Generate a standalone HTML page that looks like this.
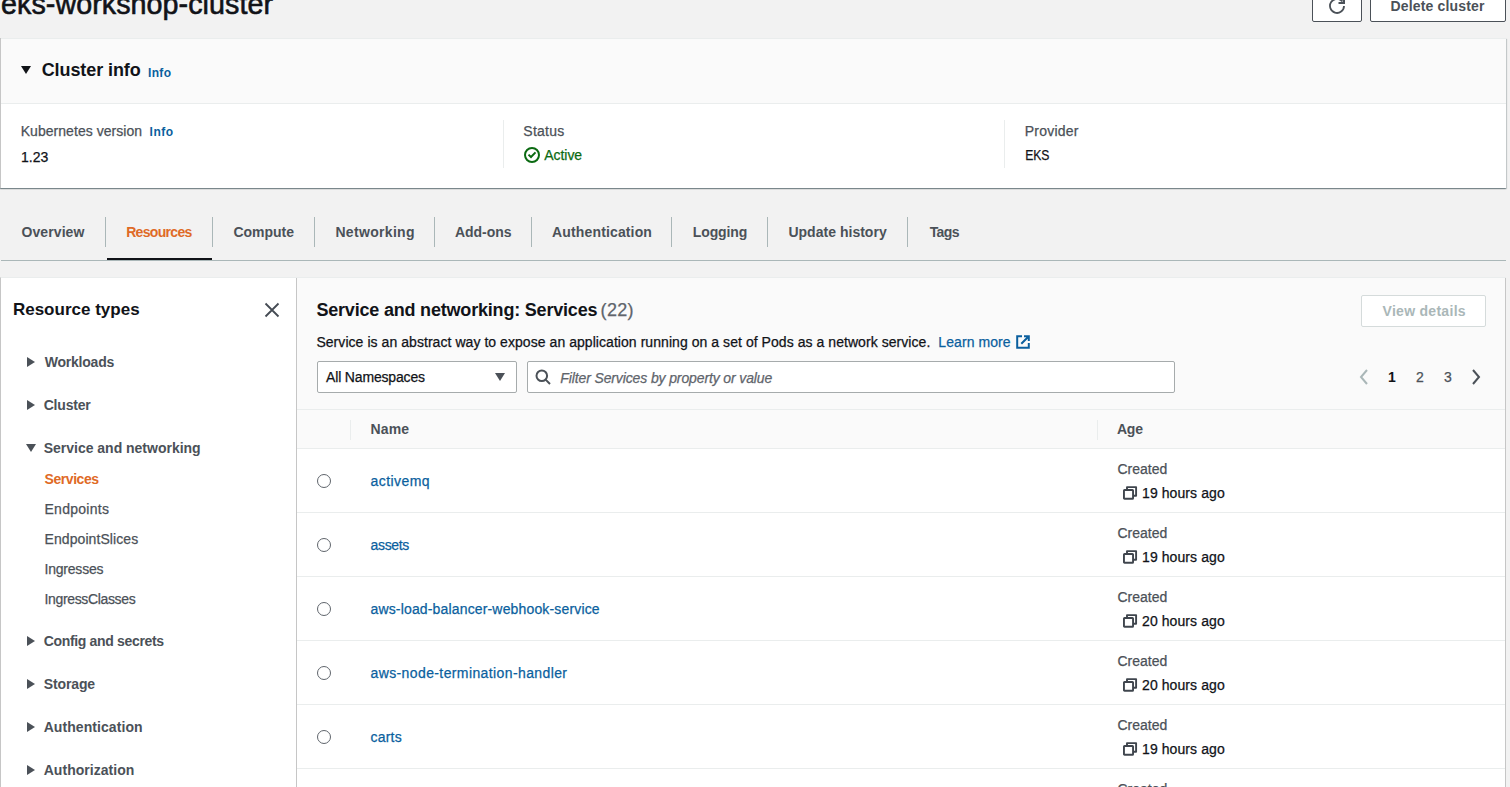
<!DOCTYPE html>
<html><head><meta charset="utf-8">
<style>
*{box-sizing:border-box;margin:0;padding:0}
html,body{width:1510px;height:787px;overflow:hidden;background:#f2f2f2;font-family:"Liberation Sans",sans-serif;color:#111318;font-size:14px;position:relative}
.abs{position:absolute}
.t{position:absolute;white-space:nowrap;line-height:1}
.r{-webkit-text-stroke:0.25px currentColor}
.btn{position:absolute;background:#fff;border:1px solid #4b5158;border-radius:2px}
.card{position:absolute;left:0;top:38px;width:1506px;height:150px;background:#fff;border-left:1px solid #c6c6c6;box-shadow:0 1px 1px 0 rgba(0,28,36,.3),1px 1px 1px 0 rgba(0,28,36,.15),-1px 1px 1px 0 rgba(0,28,36,.15)}
.chead{position:absolute;left:0;top:0;width:1505px;height:66px;background:#fafafa;border-bottom:1px solid #eaeded;border-top:1px solid #eaeded}
.tri-r{position:absolute;width:0;height:0;border-top:5px solid transparent;border-bottom:5px solid transparent;border-left:8px solid #4b5158}
.tri-d{position:absolute;width:0;height:0;border-left:5px solid transparent;border-right:5px solid transparent;border-top:8px solid #4b5158}
</style></head>
<body>
<div class="t" style="left:1.00px;top:-10.29px;font-size:28.7px;letter-spacing:0.053px;color:#111318;-webkit-text-stroke:0.6px currentColor;">eks-workshop-cluster</div>
<div class="btn" style="left:1312px;top:-10px;width:50px;height:32px"></div>
<svg class="abs" style="left:1329px;top:-2px" width="16" height="16" viewBox="0 0 16 16"><path d="M15 8A7 7 0 1 1 13.4 3.5" fill="none" stroke="#4b5158" stroke-width="1.8"/><path d="M9.5 5H15V-0.5" fill="none" stroke="#4b5158" stroke-width="2.2" stroke-linejoin="miter"/></svg>
<div class="btn" style="left:1370px;top:-10px;width:136px;height:32px"></div>
<div class="t" style="left:1390.50px;top:-1.05px;font-size:14px;font-weight:700;letter-spacing:0.169px;color:#4b5158;">Delete cluster</div>
<div class="card"><div class="chead"></div></div>
<div class="tri-d" style="left:21px;top:66px;border-left-width:5px;border-right-width:5px;border-top:8px solid #111318"></div>
<div class="t" style="left:41.70px;top:61.36px;font-size:18px;font-weight:700;letter-spacing:-0.091px;color:#111318;">Cluster info</div>
<div class="t" style="left:148.00px;top:66.84px;font-size:12px;font-weight:700;letter-spacing:0.333px;color:#0b5f9e;">Info</div>
<div class="t r" style="left:20.70px;top:124.15px;font-size:14px;letter-spacing:0.047px;color:#4b5158;">Kubernetes version</div>
<div class="t" style="left:149.60px;top:125.84px;font-size:12px;font-weight:700;letter-spacing:0.467px;color:#0b5f9e;">Info</div>
<div class="t r" style="left:21.00px;top:149.85px;font-size:14px;letter-spacing:0.033px;color:#111318;">1.23</div>
<div class="abs" style="left:503px;top:120px;width:1px;height:48px;background:#eaeded"></div>
<div class="t r" style="left:523.30px;top:124.15px;font-size:14px;letter-spacing:0.260px;color:#4b5158;">Status</div>
<svg class="abs" style="left:523px;top:146px" width="18" height="18" viewBox="0 0 18 18"><circle cx="9" cy="9" r="7" fill="none" stroke="#0b6a12" stroke-width="2"/><path d="M5.5 8.6L8 11L12.5 6.4" fill="none" stroke="#0b6a12" stroke-width="2"/></svg>
<div class="t r" style="left:544.30px;top:147.95px;font-size:14px;letter-spacing:-0.060px;color:#0b6a12;">Active</div>
<div class="abs" style="left:1004px;top:120px;width:1px;height:48px;background:#eaeded"></div>
<div class="t r" style="left:1024.80px;top:124.15px;font-size:14px;letter-spacing:0.200px;color:#4b5158;">Provider</div>
<div class="t r" style="left:1024.90px;top:148.15px;font-size:14px;color:#111318;transform:scaleX(0.8667);transform-origin:1px 0;">EKS</div>
<div class="abs" style="left:1px;top:260px;width:1505px;height:1px;background:#aab7b8"></div>
<div class="t" style="left:21.50px;top:225.45px;font-size:14px;font-weight:700;letter-spacing:0.086px;color:#4b5158;">Overview</div>
<div class="t" style="left:126.20px;top:225.45px;font-size:14px;font-weight:700;letter-spacing:-0.688px;color:#df6a26;">Resources</div>
<div class="t" style="left:233.50px;top:225.45px;font-size:14px;font-weight:700;letter-spacing:-0.033px;color:#4b5158;">Compute</div>
<div class="t" style="left:335.40px;top:225.45px;font-size:14px;font-weight:700;letter-spacing:0.322px;color:#4b5158;">Networking</div>
<div class="t" style="left:455.00px;top:225.45px;font-size:14px;font-weight:700;letter-spacing:-0.033px;color:#4b5158;">Add-ons</div>
<div class="t" style="left:552.10px;top:225.45px;font-size:14px;font-weight:700;letter-spacing:0.138px;color:#4b5158;">Authentication</div>
<div class="t" style="left:692.70px;top:225.45px;font-size:14px;font-weight:700;letter-spacing:-0.083px;color:#4b5158;">Logging</div>
<div class="t" style="left:788.40px;top:225.45px;font-size:14px;font-weight:700;letter-spacing:0.023px;color:#4b5158;">Update history</div>
<div class="t" style="left:929.70px;top:225.45px;font-size:14px;font-weight:700;letter-spacing:-0.633px;color:#4b5158;">Tags</div>
<div class="abs" style="left:105px;top:217px;width:1px;height:30px;background:#aab7b8"></div>
<div class="abs" style="left:212px;top:217px;width:1px;height:30px;background:#aab7b8"></div>
<div class="abs" style="left:314px;top:217px;width:1px;height:30px;background:#aab7b8"></div>
<div class="abs" style="left:434px;top:217px;width:1px;height:30px;background:#aab7b8"></div>
<div class="abs" style="left:531px;top:217px;width:1px;height:30px;background:#aab7b8"></div>
<div class="abs" style="left:671px;top:217px;width:1px;height:30px;background:#aab7b8"></div>
<div class="abs" style="left:767px;top:217px;width:1px;height:30px;background:#aab7b8"></div>
<div class="abs" style="left:907px;top:217px;width:1px;height:30px;background:#aab7b8"></div>
<div class="abs" style="left:107px;top:258px;width:105px;height:2px;background:#111318"></div>
<div class="abs" style="left:0;top:277px;width:296px;height:520px;background:#fff;border-top:1px solid #eaeded;border-left:1px solid #c6c6c6"></div>
<div class="t" style="left:12.90px;top:301.01px;font-size:17px;font-weight:700;letter-spacing:0.008px;color:#111318;">Resource types</div>
<svg class="abs" style="left:262px;top:300px" width="20" height="20" viewBox="0 0 20 20"><path d="M3.5 3.5L16.5 16.5M16.5 3.5L3.5 16.5" stroke="#454b54" stroke-width="1.8" fill="none"/></svg>
<div class="tri-r" style="left:27px;top:357px"></div>
<div class="t" style="left:44.70px;top:355.15px;font-size:14px;font-weight:700;letter-spacing:-0.213px;color:#4b5158;">Workloads</div>
<div class="tri-r" style="left:27px;top:400px"></div>
<div class="t" style="left:43.70px;top:398.15px;font-size:14px;font-weight:700;letter-spacing:-0.200px;color:#4b5158;">Cluster</div>
<div class="tri-d" style="left:26px;top:444px"></div>
<div class="t" style="left:43.70px;top:441.15px;font-size:14px;font-weight:700;letter-spacing:-0.010px;color:#4b5158;">Service and networking</div>
<div class="tri-r" style="left:27px;top:636px"></div>
<div class="t" style="left:43.70px;top:634.15px;font-size:14px;font-weight:700;letter-spacing:-0.329px;color:#4b5158;">Config and secrets</div>
<div class="tri-r" style="left:27px;top:679px"></div>
<div class="t" style="left:43.70px;top:677.15px;font-size:14px;font-weight:700;letter-spacing:-0.117px;color:#4b5158;">Storage</div>
<div class="tri-r" style="left:27px;top:722px"></div>
<div class="t" style="left:43.70px;top:720.15px;font-size:14px;font-weight:700;letter-spacing:0.069px;color:#4b5158;">Authentication</div>
<div class="tri-r" style="left:27px;top:765px"></div>
<div class="t" style="left:43.70px;top:763.15px;font-size:14px;font-weight:700;letter-spacing:0.042px;color:#4b5158;">Authorization</div>
<div class="t" style="left:44.50px;top:472.15px;font-size:14px;font-weight:700;letter-spacing:-0.429px;color:#df6a26;">Services</div>
<div class="t r" style="left:44.50px;top:502.15px;font-size:14px;letter-spacing:0.275px;color:#4b5158;">Endpoints</div>
<div class="t r" style="left:44.50px;top:532.15px;font-size:14px;letter-spacing:0.085px;color:#4b5158;">EndpointSlices</div>
<div class="t r" style="left:44.50px;top:562.15px;font-size:14px;letter-spacing:-0.213px;color:#4b5158;">Ingresses</div>
<div class="t r" style="left:44.50px;top:592.15px;font-size:14px;letter-spacing:-0.346px;color:#4b5158;">IngressClasses</div>
<div class="abs" style="left:296px;top:277px;width:1210px;height:1px;background:#eaeded"></div><div class="abs" style="left:296px;top:278px;width:1210px;height:520px;background:#fafafa;border-left:1px solid #c6c6c6;border-right:1px solid #c6c6c6"></div>
<div class="t" style="left:316.40px;top:301.46px;font-size:18px;font-weight:700;letter-spacing:-0.194px;color:#111318;">Service and networking: Services</div>
<div class="t r" style="left:600.60px;top:301.46px;font-size:18px;letter-spacing:0.333px;color:#5f656c;">(22)</div>
<div class="t r" style="left:316.40px;top:335.35px;font-size:14px;letter-spacing:0.055px;color:#111318;">Service is an abstract way to expose an application running on a set of Pods as a network service.</div>
<div class="t r" style="left:938.30px;top:334.75px;font-size:14px;letter-spacing:0.078px;color:#0b5f9e;">Learn more</div>
<svg class="abs" style="left:1015px;top:334px" width="16" height="16" viewBox="0 0 16 16"><path d="M7 2.2H2.2V13.8H13.8V9" fill="none" stroke="#0b5f9e" stroke-width="2"/><path d="M9 2.2H13.8V7M13.8 2.2L6.3 9.7" fill="none" stroke="#0b5f9e" stroke-width="2"/></svg>
<div class="abs" style="left:1361px;top:295px;width:125px;height:32px;background:#fff;border:1px solid #d5dbdb;border-radius:2px"></div>
<div class="t" style="left:1382.50px;top:304.15px;font-size:14px;font-weight:700;letter-spacing:0.291px;color:#aab7b8;">View details</div>
<div class="abs" style="left:317px;top:361px;width:200px;height:32px;background:#fff;border:1px solid #a6abac;border-radius:2px"></div>
<div class="t r" style="left:326.10px;top:369.95px;font-size:14px;letter-spacing:-0.169px;color:#111318;">All Namespaces</div>
<div class="abs" style="left:495px;top:373px;width:0;height:0;border-left:5px solid transparent;border-right:5px solid transparent;border-top:8px solid #4b5158"></div>
<div class="abs" style="left:527px;top:361px;width:648px;height:32px;background:#fff;border:1px solid #a6abac;border-radius:2px"></div>
<svg class="abs" style="left:534px;top:368.3px" width="18" height="18" viewBox="0 0 18 18"><circle cx="7.8" cy="7.8" r="5.3" fill="none" stroke="#4b5158" stroke-width="2"/><path d="M11.6 11.6L16 16" stroke="#4b5158" stroke-width="2"/></svg>
<div class="t r" style="left:560.30px;top:371.15px;font-size:14px;font-style:italic;letter-spacing:-0.123px;color:#5f656c;">Filter Services by property or value</div>
<svg class="abs" style="left:1356px;top:368px" width="16" height="18" viewBox="0 0 16 18"><path d="M11 2L5 9L11 16" fill="none" stroke="#aab7b8" stroke-width="2"/></svg>
<div class="t" style="left:1388.00px;top:369.75px;font-size:14px;font-weight:700;color:#111318;">1</div>
<div class="t r" style="left:1416.00px;top:369.75px;font-size:14px;color:#4b5158;">2</div>
<div class="t r" style="left:1444.00px;top:369.75px;font-size:14px;color:#4b5158;">3</div>
<svg class="abs" style="left:1468px;top:368px" width="16" height="18" viewBox="0 0 16 18"><path d="M5 2L11 9L5 16" fill="none" stroke="#4b5158" stroke-width="2"/></svg>
<div class="abs" style="left:297px;top:409px;width:1208px;height:1px;background:#eaeded"></div>
<div class="abs" style="left:350px;top:420px;width:1px;height:20px;background:#eaeded"></div>
<div class="abs" style="left:1097px;top:420px;width:1px;height:20px;background:#eaeded"></div>
<div class="t" style="left:370.50px;top:422.15px;font-size:14px;font-weight:700;letter-spacing:0.167px;color:#4b5158;">Name</div>
<div class="t" style="left:1117.00px;top:422.15px;font-size:14px;font-weight:700;letter-spacing:-0.250px;color:#4b5158;">Age</div>
<div class="abs" style="left:297px;top:448px;width:1208px;height:64px;background:#fff;border-top:1px solid #eaeded"></div>
<div class="abs" style="left:317px;top:474px;width:14px;height:14px;border:1.3px solid #5f656c;border-radius:50%;background:#fff"></div>
<div class="t r" style="left:370.50px;top:473.85px;font-size:14px;letter-spacing:0.429px;color:#0b5f9e;">activemq</div>
<div class="t r" style="left:1117.40px;top:461.85px;font-size:14px;letter-spacing:0.033px;color:#4b5158;">Created</div>
<svg class="abs" style="left:1122px;top:485px" width="16" height="16" viewBox="0 0 16 16"><path d="M5 4.2V2.1H14.1V10.8H12" fill="none" stroke="#3f454d" stroke-width="1.9" stroke-linejoin="round"/><rect x="1.95" y="4.95" width="9.1" height="8.8" rx="0.6" fill="none" stroke="#3f454d" stroke-width="1.9"/></svg>
<div class="t r" style="left:1142.00px;top:485.75px;font-size:14px;letter-spacing:0.091px;color:#111318;">19 hours ago</div>
<div class="abs" style="left:297px;top:512px;width:1208px;height:64px;background:#fff;border-top:1px solid #eaeded"></div>
<div class="abs" style="left:317px;top:538px;width:14px;height:14px;border:1.3px solid #5f656c;border-radius:50%;background:#fff"></div>
<div class="t r" style="left:370.50px;top:537.85px;font-size:14px;letter-spacing:-0.320px;color:#0b5f9e;">assets</div>
<div class="t r" style="left:1117.40px;top:525.85px;font-size:14px;letter-spacing:0.033px;color:#4b5158;">Created</div>
<svg class="abs" style="left:1122px;top:549px" width="16" height="16" viewBox="0 0 16 16"><path d="M5 4.2V2.1H14.1V10.8H12" fill="none" stroke="#3f454d" stroke-width="1.9" stroke-linejoin="round"/><rect x="1.95" y="4.95" width="9.1" height="8.8" rx="0.6" fill="none" stroke="#3f454d" stroke-width="1.9"/></svg>
<div class="t r" style="left:1142.00px;top:549.75px;font-size:14px;letter-spacing:0.091px;color:#111318;">19 hours ago</div>
<div class="abs" style="left:297px;top:576px;width:1208px;height:64px;background:#fff;border-top:1px solid #eaeded"></div>
<div class="abs" style="left:317px;top:602px;width:14px;height:14px;border:1.3px solid #5f656c;border-radius:50%;background:#fff"></div>
<div class="t r" style="left:370.50px;top:601.85px;font-size:14px;letter-spacing:0.156px;color:#0b5f9e;">aws-load-balancer-webhook-service</div>
<div class="t r" style="left:1117.40px;top:589.85px;font-size:14px;letter-spacing:0.033px;color:#4b5158;">Created</div>
<svg class="abs" style="left:1122px;top:613px" width="16" height="16" viewBox="0 0 16 16"><path d="M5 4.2V2.1H14.1V10.8H12" fill="none" stroke="#3f454d" stroke-width="1.9" stroke-linejoin="round"/><rect x="1.95" y="4.95" width="9.1" height="8.8" rx="0.6" fill="none" stroke="#3f454d" stroke-width="1.9"/></svg>
<div class="t r" style="left:1142.00px;top:613.75px;font-size:14px;letter-spacing:0.091px;color:#111318;">20 hours ago</div>
<div class="abs" style="left:297px;top:640px;width:1208px;height:64px;background:#fff;border-top:1px solid #eaeded"></div>
<div class="abs" style="left:317px;top:666px;width:14px;height:14px;border:1.3px solid #5f656c;border-radius:50%;background:#fff"></div>
<div class="t r" style="left:370.50px;top:665.85px;font-size:14px;letter-spacing:0.389px;color:#0b5f9e;">aws-node-termination-handler</div>
<div class="t r" style="left:1117.40px;top:653.85px;font-size:14px;letter-spacing:0.033px;color:#4b5158;">Created</div>
<svg class="abs" style="left:1122px;top:677px" width="16" height="16" viewBox="0 0 16 16"><path d="M5 4.2V2.1H14.1V10.8H12" fill="none" stroke="#3f454d" stroke-width="1.9" stroke-linejoin="round"/><rect x="1.95" y="4.95" width="9.1" height="8.8" rx="0.6" fill="none" stroke="#3f454d" stroke-width="1.9"/></svg>
<div class="t r" style="left:1142.00px;top:677.75px;font-size:14px;letter-spacing:0.091px;color:#111318;">20 hours ago</div>
<div class="abs" style="left:297px;top:704px;width:1208px;height:64px;background:#fff;border-top:1px solid #eaeded"></div>
<div class="abs" style="left:317px;top:730px;width:14px;height:14px;border:1.3px solid #5f656c;border-radius:50%;background:#fff"></div>
<div class="t r" style="left:370.50px;top:729.85px;font-size:14px;letter-spacing:0.200px;color:#0b5f9e;">carts</div>
<div class="t r" style="left:1117.40px;top:717.85px;font-size:14px;letter-spacing:0.033px;color:#4b5158;">Created</div>
<svg class="abs" style="left:1122px;top:741px" width="16" height="16" viewBox="0 0 16 16"><path d="M5 4.2V2.1H14.1V10.8H12" fill="none" stroke="#3f454d" stroke-width="1.9" stroke-linejoin="round"/><rect x="1.95" y="4.95" width="9.1" height="8.8" rx="0.6" fill="none" stroke="#3f454d" stroke-width="1.9"/></svg>
<div class="t r" style="left:1142.00px;top:741.75px;font-size:14px;letter-spacing:0.091px;color:#111318;">19 hours ago</div>
<div class="abs" style="left:297px;top:768px;width:1208px;height:64px;background:#fff;border-top:1px solid #eaeded"></div>
<div class="abs" style="left:317px;top:794px;width:14px;height:14px;border:1.3px solid #5f656c;border-radius:50%;background:#fff"></div>
<div class="t r" style="left:370.50px;top:793.85px;font-size:14px;color:#0b5f9e;">catalog</div>
<div class="t r" style="left:1117.40px;top:781.85px;font-size:14px;letter-spacing:0.033px;color:#4b5158;">Created</div>
<svg class="abs" style="left:1122px;top:805px" width="16" height="16" viewBox="0 0 16 16"><path d="M5 4.2V2.1H14.1V10.8H12" fill="none" stroke="#3f454d" stroke-width="1.9" stroke-linejoin="round"/><rect x="1.95" y="4.95" width="9.1" height="8.8" rx="0.6" fill="none" stroke="#3f454d" stroke-width="1.9"/></svg>
<div class="t r" style="left:1142.00px;top:805.75px;font-size:14px;letter-spacing:0.091px;color:#111318;">19 hours ago</div>
</body></html>
